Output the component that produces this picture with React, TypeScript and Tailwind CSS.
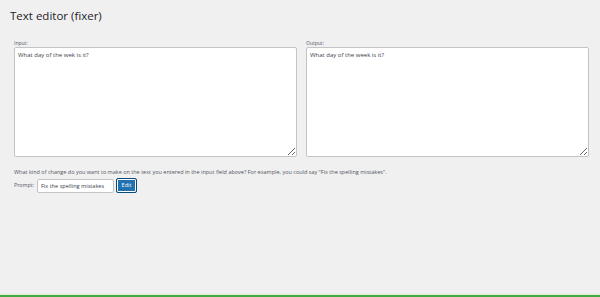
export default function App() {
  return (
    <div className="flex min-h-[297px] flex-col bg-[#f0f0f1] font-['Open_Sans',sans-serif] text-[#1d2327]">
      <div className="flex-1 px-[10px] pt-[9px]">
        <h1 className="text-[11.5px] leading-[14px] font-normal">Text editor (fixer)</h1>

        <div className="mt-[17px] grid grid-cols-2 gap-[9.5px] pl-[4px] pr-[1.5px]">
          <label className="flex flex-col">
            <span className="text-[5px] leading-[6px] text-[#50575e]">Input:</span>
            <textarea
              className="mt-[1px] h-[110px] resize-y rounded-[2px] border border-[#c3c4c7] bg-white px-[3px] py-[3px] text-[6px] leading-[8px] text-[#3c434a] outline-none"
              defaultValue="What day of the wek is it?"
            />
          </label>
          <label className="flex flex-col">
            <span className="text-[5px] leading-[6px] text-[#50575e]">Output:</span>
            <textarea
              className="mt-[1px] h-[110px] resize-y rounded-[2px] border border-[#c3c4c7] bg-white px-[3px] py-[3px] text-[6px] leading-[8px] text-[#3c434a] outline-none"
              defaultValue="What day of the week is it?"
            />
          </label>
        </div>

        <p className="mt-[12px] px-[4px] text-[5.5px] leading-[7px] text-[#50575e]">
          What kind of change do you want to make on the text you entered in the input field above? For example, you could say "Fix the spelling mistakes".
        </p>

        <div className="mt-[2px] flex items-center px-[4px]">
          <span className="text-[5.3px] text-[#50575e]">Prompt:</span>
          <input
            className="ml-[3px] h-[14px] w-[77px] rounded-[2px] border border-[#c3c4c7] bg-white px-[3px] text-[5.6px] text-[#3c434a] outline-none"
            defaultValue="Fix the spelling mistakes"
          />
          <button className="ml-[2px] h-[15px] w-[21px] rounded-[2px] border border-[#0a4b78] bg-[#2271b1] text-[5.5px] text-white shadow-[0_0_0_1px_#fff_inset]">
            Edit
          </button>
        </div>
      </div>

      <div className="h-[2px] bg-[#e2f0df]" />
      <div className="h-[2px] bg-[#42a83f]" />
    </div>
  )
}
